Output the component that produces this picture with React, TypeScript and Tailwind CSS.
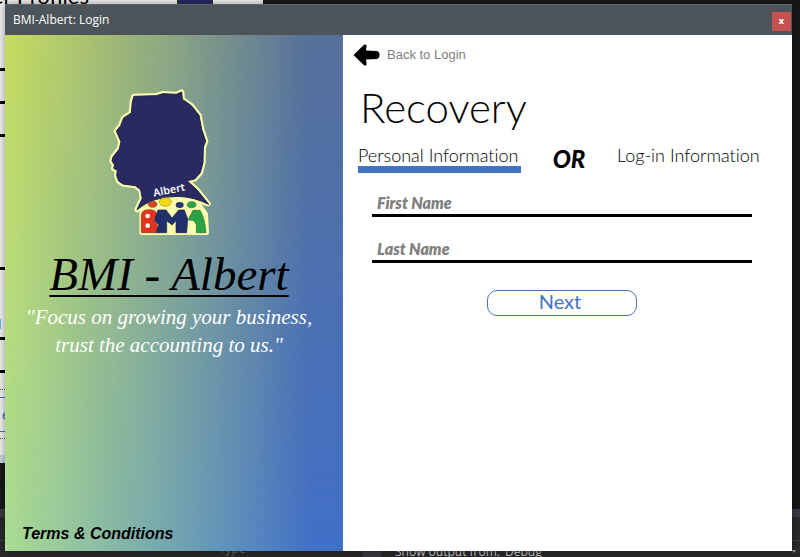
import type { ReactNode } from "react";

const GOTHIC = "font-['Century_Gothic','Lato',sans-serif] [font-variant-ligatures:none]";

function Logo() {
  return (
    <svg viewBox="40 24 312 444" className="h-[148px] w-[104px]" role="img" aria-label="Albert BMI logo">
      <g stroke="#fbfbae" strokeWidth="16" strokeLinejoin="round" fill="#fbfbae">
        <path d="M118 46 L185 44 L205 38 L245 40 L261 33 L263 55 L290 74 L313 103 L321 145 L333 181 L326 198 L325 245 L317 275 L300 294 L277 299 L308 328 L340 368 L300 355 L250 345 L200 350 L160 365 L127 386 L143 352 L138 326 L122 314 L85 309 L72 300 L66 284 L68 268 L57 262 L60 252 L52 240 L55 228 L74 204 L79 182 L65 150 L78 134 L87 111 L110 96 L113 63 Z" />
        <path d="M142 386 L162 362 H305 L332 400 L335 454 H142 Z" />
      </g>
      <path
        d="M118 46 L185 44 L205 38 L245 40 L261 33 L263 55 L290 74 L313 103 L321 145 L333 181 L326 198 L325 245 L317 275 L300 294 L277 299 L308 328 L342 370 Q300 348 250 346 Q175 346 127 386 L143 352 L138 326 L122 314 L85 309 L72 300 L66 284 L68 268 L57 262 L60 252 L52 240 L55 228 L74 204 L79 182 L65 150 L78 134 L87 111 L110 96 L113 63 Z"
        fill="#282a61"
        stroke="#1d2147"
        strokeWidth="3"
        strokeLinejoin="round"
      />
      <ellipse cx="174" cy="370" rx="13" ry="9" fill="#d94327" stroke="#7c4a2c" strokeWidth="2" />
      <ellipse cx="212" cy="363" rx="18" ry="13" fill="#f4d914" stroke="#a5941c" strokeWidth="2" />
      <ellipse cx="255" cy="372" rx="12" ry="9" fill="#263572" />
      <ellipse cx="291" cy="371" rx="13" ry="9" fill="#2fa34b" stroke="#277238" strokeWidth="2" />
      <path d="M140 455 V402 Q142 386 162 386 Q187 386 188 403 Q188 413 180 419 L190 437 L184 455 Z" fill="#e03420" stroke="#9d3020" strokeWidth="2" />
      <circle cx="159" cy="405" r="7" fill="#fff8ee" />
      <circle cx="159" cy="434" r="7" fill="#fff8ee" />
      <path d="M184 455 L192 433 L180 418 L190 387 H214 L232 411 L252 387 H269 L279 414 L276 455 H244 V419 L232 432 L216 419 V455 Z" fill="#20306b" stroke="#17204d" strokeWidth="2" />
      <path d="M280 417 L295 388 H316 Q330 408 334 455 H305 V430 L296 418 Z" fill="#2ba244" stroke="#1f7434" strokeWidth="2" />
      <text x="178" y="347" transform="rotate(-11 178 347)" className="font-['Noto_Sans',sans-serif] text-[32px] font-semibold" fill="#fff">
        Albert
      </text>
    </svg>
  );
}

function BackArrow() {
  return (
    <svg viewBox="0 0 27 22" className="h-[22px] w-[27px]" aria-hidden="true">
      <path d="M0.500 11 L11 0.800 Q14 -0.500 13.500 3 L13 6.500 L24 7 Q27 8 26.500 11 Q27 14 24 15 L13 15.500 L13.500 19 Q14 22.500 11 21.200 Z" fill="#000" />
    </svg>
  );
}

function Field({ id, label }: { id: string; label: string }) {
  return (
    <div className="border-b-3 border-black">
      <label htmlFor={id} className="sr-only">
        {label}
      </label>
      <input
        id={id}
        placeholder={label}
        className={`${GOTHIC} block h-[23px] w-full bg-transparent px-[5px] text-base leading-5 font-extrabold italic text-black outline-none placeholder:text-[#808080]`}
      />
    </div>
  );
}

function Backdrop() {
  return (
    <div aria-hidden="true" className="absolute inset-0 flex flex-col overflow-hidden bg-[#181818]">
      <div className="flex h-[509px] shrink-0 items-start">
        <div className="flex h-[463px] w-[263px] justify-between border-b border-[#777] bg-[#f0f0f0]">
          <div className="w-[5px]">
            <div className="flex h-[71px] items-start border-b-3 border-black">
              <div className={`${GOTHIC} -mt-4 -ml-2 text-[22px] leading-6 whitespace-nowrap`}>er Profiles</div>
            </div>
            <div className="h-[33px] border-b-3 border-black" />
            <div className="h-[33px] border-b-3 border-black" />
            <div className="h-[133px] border-b-3 border-black" />
            <div className="flex h-[70px] items-end border-b-3 border-black pb-2">
              <div className="h-[10px] w-px bg-[#62bce8]" />
            </div>
            <div className="h-[33px] border-b-3 border-black" />
            <div className="mt-4 border-t border-dotted border-[#555]" />
            <div className={`${GOTHIC} mt-[7px] h-[35px] border-y border-[#4472c4] pl-[2px] text-base leading-8 text-[#4472c4]`}>e</div>
            <div className="mt-[6px] border-t border-dotted border-[#555]" />
            <div className="mt-4 h-2 bg-[#c8d4e2]" />
          </div>
          <div className="mr-[49px] h-4 w-[38px] border-x border-[#fbfbae] bg-[#282a61]" />
        </div>
      </div>
      <div className="h-2 shrink-0 bg-[#3b3a42]" />
      <div className="h-6 shrink-0 border-b border-[#3d3d42] bg-[#29292c]" />
      <div className="flex grow items-start bg-[#29292c] pr-1 pl-[219px] font-['Open_Sans',sans-serif] text-xs leading-4 text-[#c4c4c4]">
        <span className="w-36 text-[#68686a]">Type</span>
        <span className="h-4 w-8 bg-linear-to-r from-[#38383c] from-56% to-transparent to-56%" />
        <span className="mt-[3px] w-[110px] whitespace-nowrap">Show output from:</span>
        <span className="mt-[3px]">Debug</span>
        <span className="mt-[9px] ml-auto size-0 border-x-2 border-t-3 border-x-transparent border-t-[#999]" />
      </div>
    </div>
  );
}

function Tab({ active, children }: { active?: boolean; children: ReactNode }) {
  return (
    <button
      type="button"
      aria-pressed={active}
      className={`${GOTHIC} h-[27px] border-b-7 pb-[3px] text-left text-lg leading-4 font-light whitespace-nowrap text-black ${
        active ? "w-[163px] border-[#4472c4]" : "w-[143px] border-transparent"
      }`}
    >
      {children}
    </button>
  );
}

export default function App() {
  return (
    <div className="relative flex min-h-screen pt-1 pr-2 pb-1.5 pl-[5px]">
      <Backdrop />
      <main className="relative flex grow flex-col bg-white shadow-[0_0_8px_rgba(0,0,0,0.4)]">
        <header className="flex h-[31px] shrink-0 items-center justify-between border-t border-[#5d676c] bg-[#4c5459] pr-px pl-2">
          <span className="font-['Open_Sans',sans-serif] text-xs text-white">BMI-Albert: Login</span>
          <button type="button" aria-label="Close" className="mt-0.5 size-[19px] bg-[#c75050] font-['DejaVu_Sans',sans-serif] text-[9px] leading-4 font-bold text-white">
            x
          </button>
        </header>
        <div className="flex grow">
          <aside className="relative flex w-[338px] shrink-0 flex-col bg-[linear-gradient(to_right,#aadc94,#6d9fb5_55%,#4270c8_91%)] pt-[54px]">
            <div className="absolute inset-0 bg-[linear-gradient(to_right,#c6dc5e,#88a284_52%,#56709a_90%)] mask-b-from-0% mask-b-to-100%" />
            <div className="relative flex grow flex-col items-center pr-[10px]">
              <div className="pr-[18px]">
                <Logo />
              </div>
              <h1 className="mt-3 font-['Monotype_Corsiva','Liberation_Serif',serif] text-[47px] leading-[50px] font-medium whitespace-nowrap text-black italic underline decoration-2 underline-offset-[5px]">
                BMI - Albert
              </h1>
              <p className="mt-1 text-center font-['Monotype_Corsiva','Liberation_Serif',serif] text-[21px] leading-7 whitespace-nowrap text-white italic">
                "Focus on growing your business,
                <br />
                trust the accounting to us."
              </p>
              <a href="#terms" className="mt-auto mb-[7px] ml-[17px] self-start font-['Liberation_Sans',sans-serif] text-base leading-5 font-bold text-black italic">
                Terms &amp; Conditions
              </a>
            </div>
          </aside>
          <section className="min-w-0 grow pr-8 pl-[15px]">
            <button type="button" className="-ml-[5px] mt-2 flex h-6 items-center gap-[7px] font-['Liberation_Sans',sans-serif] text-[13px] text-[#808080]">
              <BackArrow />
              Back to Login
            </button>
            <h2 className={`${GOTHIC} mt-[18px] pl-0.5 text-[42px] leading-[44px] font-light text-black`}>Recovery</h2>
            <div className="mt-[17px] flex items-start">
              <Tab active>Personal Information</Tab>
              <span className={`${GOTHIC} w-24 text-center text-2xl leading-[26px] font-black text-black italic`}>OR</span>
              <Tab>Log-in Information</Tab>
            </div>
            <form className="mt-[18px] flex flex-col gap-5 pr-2 pl-[14px]" onSubmit={(event) => event.preventDefault()}>
              <Field id="first-name" label="First Name" />
              <Field id="last-name" label="Last Name" />
              <button type="submit" className={`${GOTHIC} mt-[7px] h-[26px] w-[150px] self-center rounded-[10px] border border-[#4472c4] pr-1 pb-1 text-xl leading-5 text-[#4472c4]`}>
                Next
              </button>
            </form>
          </section>
        </div>
      </main>
    </div>
  );
}
